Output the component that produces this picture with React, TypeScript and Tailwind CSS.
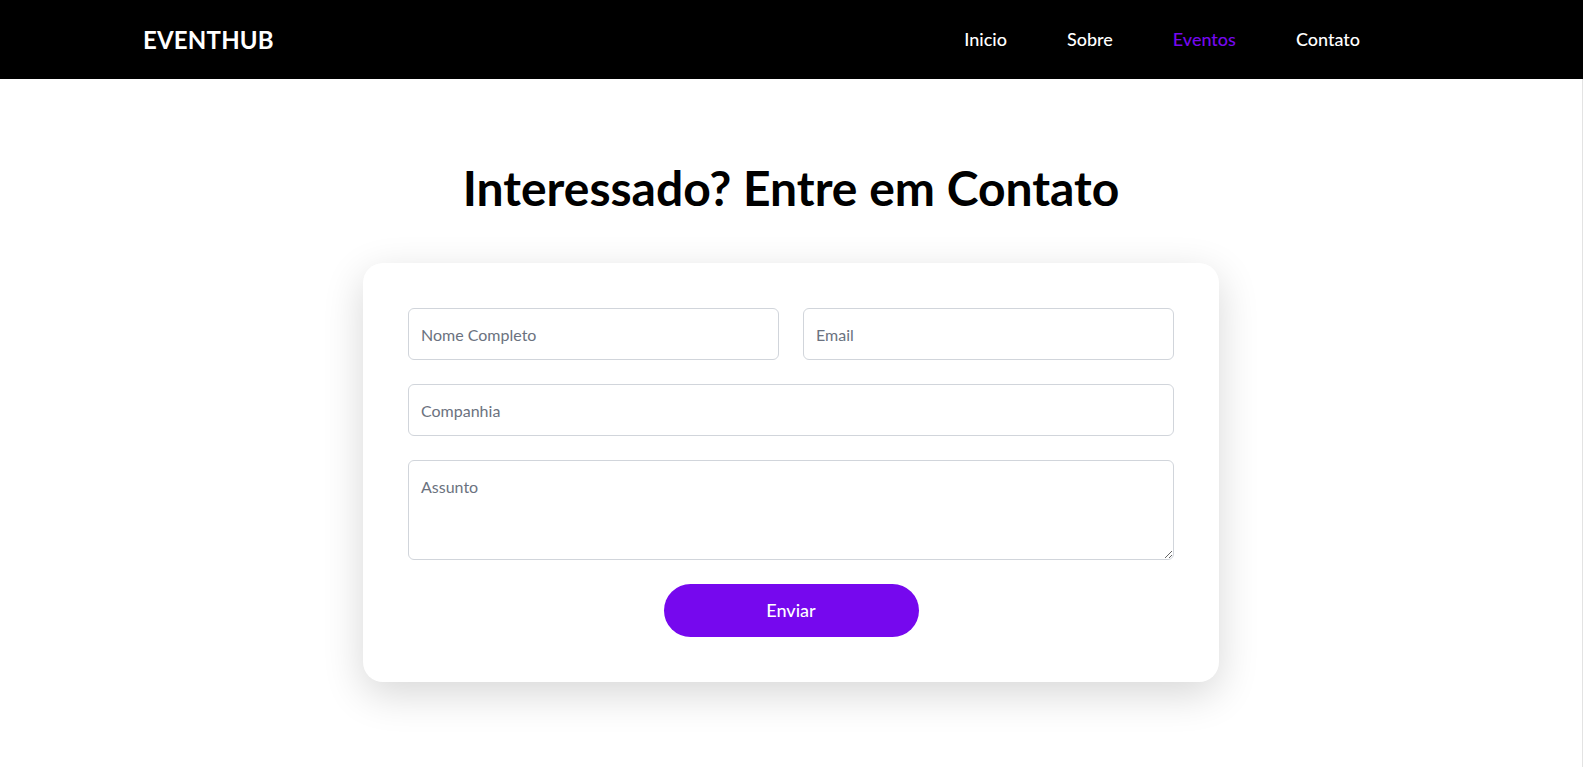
import React from "react";

export default function App() {
  const font = { fontFamily: "Lato, 'Noto Sans', sans-serif" };
  const field =
    "h-[52px] border border-[#d1d5db] rounded-md px-3 text-[16px] placeholder:text-[#6b7280] outline-none bg-white";
  return (
    <div className="min-h-[767px] bg-white text-black flex flex-col" style={font}>
      <header className="h-[79px] shrink-0 bg-black flex items-center justify-between pl-[143px] pr-[223px]">
        <div className="text-white text-[24px] font-bold tracking-[0.2px]">EVENTHUB</div>
        <nav className="flex items-center gap-[60px] text-[18px] font-medium">
          <a className="text-white">Inicio</a>
          <a className="text-white">Sobre</a>
          <a className="text-[#7608ee]">Eventos</a>
          <a className="text-white">Contato</a>
        </nav>
      </header>
      <main className="flex-1 flex flex-col items-center pt-[80px] pb-[80px] border-r border-[#e3e3e3]">
        <h1 className="text-[48px] leading-[58px] font-bold text-black">Interessado? Entre em Contato</h1>
        <form className="mt-[46px] w-[856px] bg-white rounded-[20px] p-[45px] shadow-[0_12px_40px_rgba(0,0,0,0.16)] flex flex-col gap-6">
          <div className="grid grid-cols-2 gap-[24px]">
            <input placeholder="Nome Completo" className={field} />
            <input placeholder="Email" className={field} />
          </div>
          <input placeholder="Companhia" className={field} />
          <textarea
            placeholder="Assunto"
            className="h-[100px] border border-[#d1d5db] rounded-md px-3 pt-[14px] text-[16px] placeholder:text-[#6b7280] outline-none block bg-white"
          />
          <div className="flex justify-center">
            <button
              type="button"
              className="w-[255px] h-[53px] rounded-full bg-[#7608ee] text-white text-[18px] font-medium"
            >
              Enviar
            </button>
          </div>
        </form>
      </main>
    </div>
  );
}
